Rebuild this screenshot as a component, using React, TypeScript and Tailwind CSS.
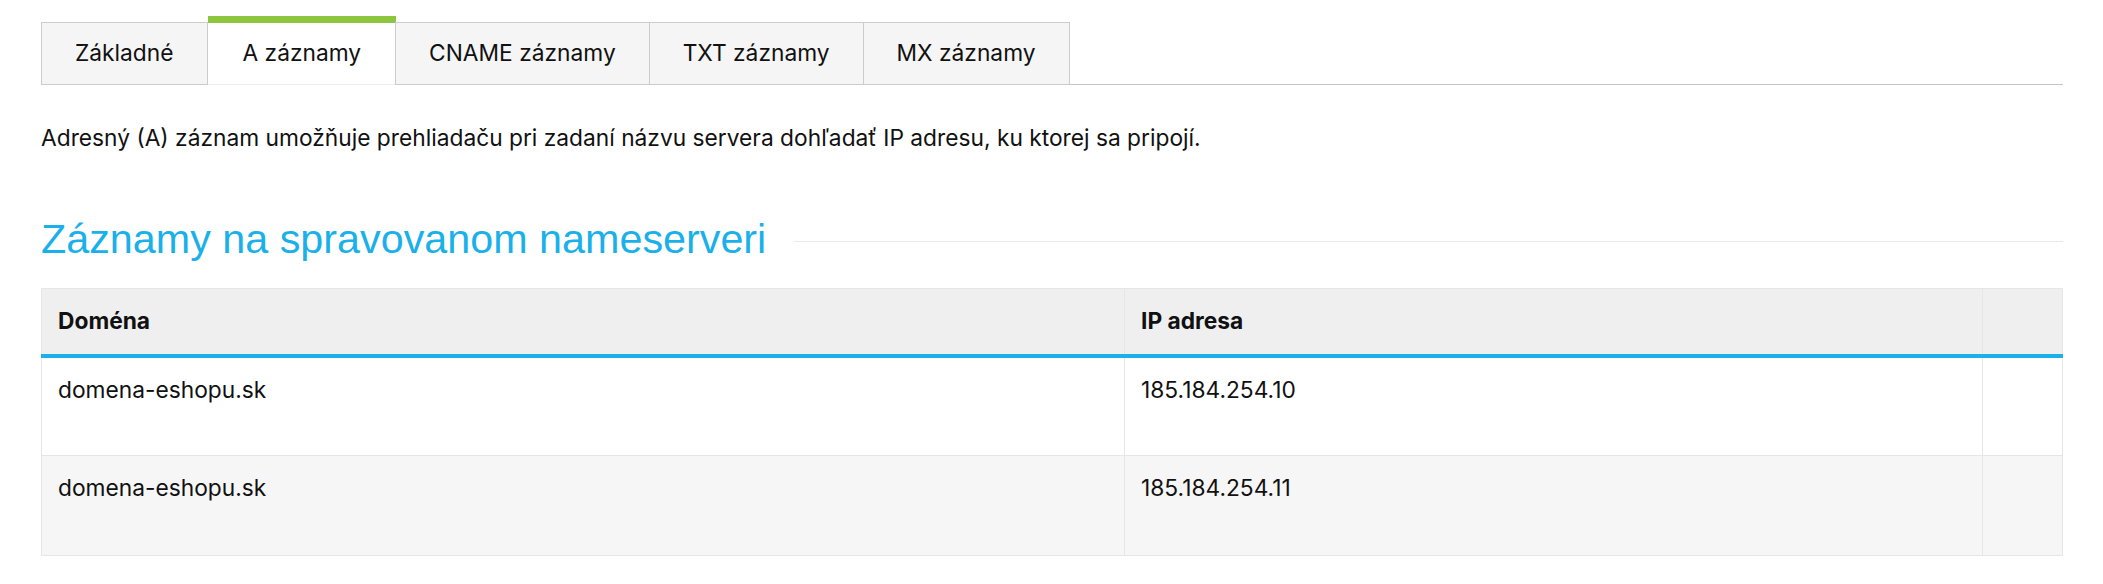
import React from 'react';

const tabs = ['Základné', 'A záznamy', 'CNAME záznamy', 'TXT záznamy', 'MX záznamy'];

const rows = [
    { domain: 'domena-eshopu.sk', ip: '185.184.254.10' },
    { domain: 'domena-eshopu.sk', ip: '185.184.254.11' }
];

export default function App() {
    const active = 1;

    return (
        <div className="min-h-[584px] bg-white pl-[41px] pr-10 pt-4 text-[22.75px] text-[#111] font-['Inter',sans-serif]">
            {/* Záložky */}
            <div className="flex items-end border-b border-[#c4c4c4]">
                {tabs.map((tab, idx) =>
                    idx === active ? (
                        <div
                            key={tab}
                            className="h-[69px] -mb-px flex items-center justify-center px-[35px] bg-white border-t-[7px] border-[#8cc63f] border-b border-b-[#eeeeee] leading-none"
                        >
                            {tab}
                        </div>
                    ) : (
                        <div
                            key={tab}
                            className="h-[63px] -mb-px flex items-center justify-center px-[33px] bg-[#f5f5f5] border border-[#cccccc] -ml-px first:ml-0 leading-none"
                        >
                            {tab}
                        </div>
                    )
                )}
            </div>

            {/* Popis */}
            <p className="mt-[37px] leading-8">
                Adresný (A) záznam umožňuje prehliadaču pri zadaní názvu servera dohľadať IP adresu, ku ktorej sa pripojí.
            </p>

            {/* Nadpis sekcie */}
            <div className="mt-[61px] flex items-center gap-7">
                <h2 className="text-[41.3px] leading-[48px] text-[#1ab0ea] font-['Liberation_Sans',Arial,sans-serif] whitespace-nowrap">
                    Záznamy na spravovanom nameserveri
                </h2>
                <div className="flex-1 h-px bg-[#e9e9e9] mt-1" />
            </div>

            {/* Tabuľka */}
            <table className="mt-[25px] w-full border-collapse">
                <thead>
                    <tr className="bg-[#efefef]">
                        <th className="w-[1083px] h-[67px] border border-[#e6e6e6] border-b-4 border-b-[#1ab0ea] px-4 text-left font-bold">
                            Doména
                        </th>
                        <th className="w-[858px] border border-[#e6e6e6] border-b-4 border-b-[#1ab0ea] px-4 text-left font-bold">
                            IP adresa
                        </th>
                        <th className="border border-[#e6e6e6] border-b-4 border-b-[#1ab0ea]" />
                    </tr>
                </thead>
                <tbody>
                    {rows.map((row, idx) => (
                        <tr key={idx} className={idx % 2 === 1 ? 'bg-[#f6f6f6]' : 'bg-white'}>
                            <td className="h-[100px] border border-[#e6e6e6] px-4 pt-[16px] align-top leading-8">{row.domain}</td>
                            <td className="border border-[#e6e6e6] px-4 pt-[16px] align-top leading-8">{row.ip}</td>
                            <td className="border border-[#e6e6e6]" />
                        </tr>
                    ))}
                </tbody>
            </table>
        </div>
    );
}
